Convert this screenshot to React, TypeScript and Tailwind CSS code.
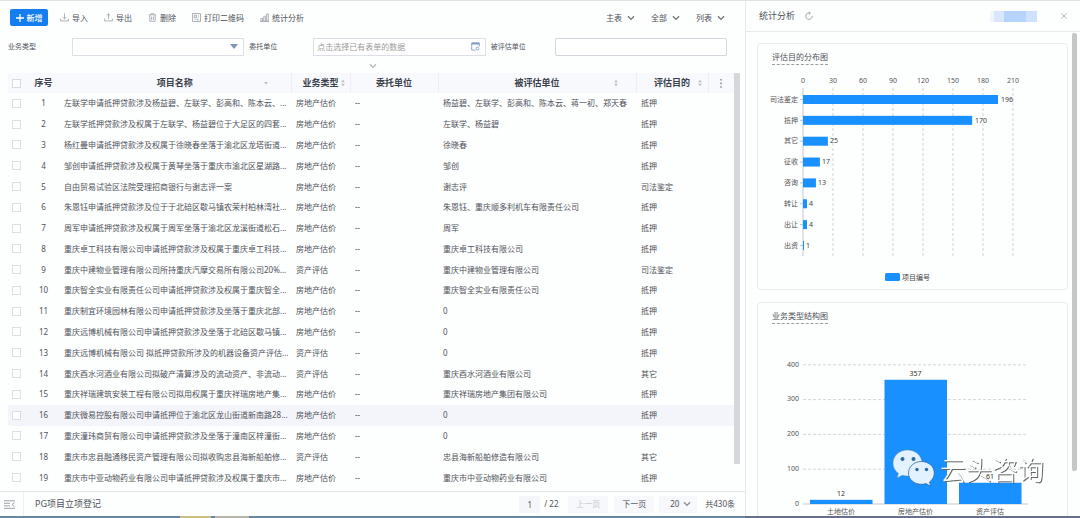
import { useState, type ReactNode } from 'react';

type Row = { name: string; type: string; subject: string; purpose: string };

const RE = '房地产估价';
const AS = '资产评估';

const rows: Row[] = [
  { name: '左联学申请抵押贷款涉及杨益碧、左联学、彭高和、陈本云、...', type: RE, subject: '杨益碧、左联学、彭高和、陈本云、蒋一初、郑天春', purpose: '抵押' },
  { name: '左联学抵押贷款涉及权属于左联学、杨益碧位于大足区的四套...', type: RE, subject: '左联学、杨益碧', purpose: '抵押' },
  { name: '杨红曼申请抵押贷款涉及权属于徐晓春坐落于渝北区龙塔街道...', type: RE, subject: '徐晓春', purpose: '抵押' },
  { name: '邹创申请抵押贷款涉及权属于黄琴坐落于重庆市渝北区星湖路...', type: RE, subject: '邹创', purpose: '抵押' },
  { name: '自由贸易试验区法院受理招商银行与谢志评一案', type: RE, subject: '谢志评', purpose: '司法鉴定' },
  { name: '朱恩钰申请抵押贷款涉及位于于北碚区歇马镇农荣村柏林湾社...', type: RE, subject: '朱恩钰、重庆顺多利机车有限责任公司', purpose: '抵押' },
  { name: '周军申请抵押贷款涉及权属于周军坐落于渝北区龙溪街道松石...', type: RE, subject: '周军', purpose: '抵押' },
  { name: '重庆卓工科技有限公司申请抵押贷款涉及权属于重庆卓工科技...', type: RE, subject: '重庆卓工科技有限公司', purpose: '抵押' },
  { name: '重庆中建物业管理有限公司所持重庆汽摩交易所有限公司20%...', type: AS, subject: '重庆中建物业管理有限公司', purpose: '司法鉴定' },
  { name: '重庆智全实业有限责任公司申请抵押贷款涉及权属于重庆智全...', type: RE, subject: '重庆智全实业有限责任公司', purpose: '抵押' },
  { name: '重庆制宜环境园林有限公司申请抵押贷款涉及坐落于重庆北部...', type: RE, subject: '0', purpose: '抵押' },
  { name: '重庆远博机械有限公司申请抵押贷款涉及坐落于北碚区歇马镇...', type: RE, subject: '0', purpose: '抵押' },
  { name: '重庆远博机械有限公司 拟抵押贷款所涉及的机器设备资产评估...', type: AS, subject: '0', purpose: '抵押' },
  { name: '重庆酉水河酒业有限公司拟破产清算涉及的流动资产、非流动...', type: AS, subject: '重庆酉水河酒业有限公司', purpose: '其它' },
  { name: '重庆祥瑞建筑安装工程有限公司拟用权属于重庆祥瑞房地产集...', type: RE, subject: '重庆祥瑞房地产集团有限公司', purpose: '抵押' },
  { name: '重庆微易控股有限公司申请抵押位于渝北区龙山街道新南路28...', type: RE, subject: '0', purpose: '抵押' },
  { name: '重庆潼玮商贸有限公司申请抵押贷款涉及坐落于潼南区梓潼街...', type: RE, subject: '0', purpose: '抵押' },
  { name: '重庆市忠县融通移民资产管理有限公司拟收购忠县海新船舶修...', type: AS, subject: '忠县海新船舶修造有限公司', purpose: '其它' },
  { name: '重庆市中亚动物药业有限公司申请抵押贷款涉及权属于重庆市...', type: RE, subject: '重庆市中亚动物药业有限公司', purpose: '抵押' },
];

const purposeData = [
  { label: '司法鉴定', value: 196 },
  { label: '抵押', value: 170 },
  { label: '其它', value: 25 },
  { label: '征收', value: 17 },
  { label: '咨询', value: 13 },
  { label: '转让', value: 4 },
  { label: '出让', value: 4 },
  { label: '出资', value: 1 },
];

const typeData = [
  { label: '土地估价', value: 12 },
  { label: '房地产估价', value: 357 },
  { label: '资产评估', value: 61 },
];

function Chevron({ className = '' }: { className?: string }) {
  return (
    <svg viewBox="0 0 8 6" className={`pointer-events-none h-[6px] w-[8px] ${className}`} fill="none" stroke="currentColor" strokeWidth="1.3">
      <path d="M1 1.2 4 4.4 7 1.2" />
    </svg>
  );
}

function ToolButton({ icon, label }: { icon: ReactNode; label: string }) {
  return (
    <button type="button" className="flex items-center gap-[3px] whitespace-nowrap">
      <svg viewBox="0 0 10 10" className="size-[9px] text-[#a4a8af]" fill="none" stroke="currentColor" strokeWidth="1">
        {icon}
      </svg>
      {label}
    </button>
  );
}

function ViewSelect({ label, value }: { label: string; value: string }) {
  return (
    <div className="grid w-[29px] items-center">
      <select aria-label={label} className="col-start-1 row-start-1 appearance-none bg-transparent" defaultValue={value}>
        <option>{value}</option>
      </select>
      <Chevron className="col-start-1 row-start-1 justify-self-end text-[#6d7078]" />
    </div>
  );
}

function HeadCell({ label, sort, gap = 'mr-[6px]' }: { label: string; sort?: 'both' | 'down'; gap?: string }) {
  return (
    <th scope="col" className="border-r border-[#eceef3] p-0 font-bold">
      <div className="flex items-center whitespace-nowrap">
        <span className="min-w-0 flex-1" />
        {label}
        <span className="flex min-w-0 flex-1 justify-end">
          {sort && (
            <svg viewBox="0 0 4 8" className={`h-[8px] w-[4px] shrink-0 fill-[#b9bcc4] ${gap}`}>
              {sort === 'both' && <path d="M2 .8 3.8 3.3H.2Z" />}
              {sort === 'both' ? <path d="M2 7.2 3.8 4.7H.2Z" /> : <path d="M2 5.500 4 3H0Z" />}
            </svg>
          )}
        </span>
      </div>
    </th>
  );
}

function PurposeChart() {
  const x0 = 45;
  return (
    <svg viewBox="0 0 309 219" className="block w-full text-[7px]" role="img" aria-label="评估目的分布图">
      {[0, 30, 60, 90, 120, 150, 180, 210].map((t) => (
        <g key={t}>
          <line x1={x0 + t} x2={x0 + t} y1="18" y2="186" stroke={t ? '#d3d3d3' : '#c4c8d0'} strokeWidth="1" strokeDasharray={t ? '3 2' : undefined} />
          <text x={x0 + t} y="13" textAnchor="middle" fill="#555">{t}</text>
        </g>
      ))}
      {purposeData.map((d, i) => {
        const y = 29.5 + i * 20.85;
        return (
          <g key={d.label}>
            <line x1={x0 - 3} x2={x0} y1={y} y2={y} stroke="#a9c6e6" />
            <text x={x0 - 5} y={y + 2.2} textAnchor="end" fill="#555">{d.label}</text>
            <rect x={x0} y={y - 4.5} width={d.value * 0.995} height="9" fill="#1890ff" />
            <text x={x0 + d.value + 2} y={y + 2.2} fill="#444">{d.value}</text>
          </g>
        );
      })}
      <rect x="127" y="203" width="15" height="8" rx="1.5" fill="#1890ff" />
      <text x="144" y="210" fill="#444">项目编号</text>
    </svg>
  );
}

function TypeChart() {
  const base = 175;
  return (
    <svg viewBox="0 0 309 190" className="block w-full text-[7px]" role="img" aria-label="业务类型结构图">
      {[0, 100, 200, 300, 400].map((t) => {
        const y = base - t * 0.348;
        return (
          <g key={t}>
            <line x1="45" x2="270" y1={y} y2={y} stroke={t ? '#d6d6d6' : '#c4c8d0'} strokeDasharray={t ? '3 2' : undefined} />
            <text x="41" y={y + 1.8} textAnchor="end" fill="#555">{t}</text>
          </g>
        );
      })}
      {typeData.map((d, i) => (
        <rect key={d.label} x={52 + i * 74.5} y={base - d.value * 0.348} width="62.5" height={d.value * 0.348} fill="#1890ff" />
      ))}
      <g transform="translate(134 120)">
        <path d="M15.500 1C7.200 1 1 6.900 1 14.200c0 4.200 2.100 7.700 5.400 10.200L5 29l5.200-2.700c1.700.5 3.400.8 5.300.8C23.700 27.100 30 21.400 30 14.200 30 6.900 23.700 1 15.500 1Z" fill="#e3f2ff" stroke="#5d86ad" strokeWidth=".5" />
        <circle cx="10.500" cy="10" r="2" fill="#2e69a4" />
        <circle cx="21.500" cy="10" r="2" fill="#2e69a4" />
        <path d="M29.500 12.500C22.200 12.500 16.500 17.500 16.500 24s5.700 11.300 13 11.300c1.600 0 3.100-.2 4.500-.7l4.800 2.600-1.300-4.200c3-2.100 4.800-5.300 4.800-9 0-6.500-5.600-11.500-12.800-11.500Z" fill="#e3f2ff" stroke="#2e69a4" strokeWidth=".8" />
        <circle cx="25" cy="20.500" r="1.700" fill="#2e69a4" />
        <circle cx="34.500" cy="20.500" r="1.700" fill="#2e69a4" />
      </g>
      <text x="182" y="151" fill="#fff" className="text-[26px] font-light [filter:drop-shadow(1px_1px_0.5px_#666)]">云头咨询</text>
      {typeData.map((d, i) => (
        <g key={d.label} textAnchor="middle">
          <text x={83 + i * 74.5} y={base - d.value * 0.348 - 4} fill="#333">{d.value}</text>
          <text x={83 + i * 74.5} y={base + 10} fill="#555">{d.label}</text>
        </g>
      ))}
    </svg>
  );
}

export default function App() {
  const [page, setPage] = useState('1');
  return (
    <div className="flex h-screen flex-col overflow-hidden border-t border-[#dfe1e4] bg-[#fdfefe] font-['Noto_Sans','Noto_Sans_CJK_SC',sans-serif] text-[8px] leading-[10px] text-[#4f525a]">
      <div className="flex min-h-0 flex-1">
        <main className="flex min-w-0 flex-1 flex-col">
          <div className="flex h-[33px] items-center justify-between pr-[20px] pl-[10px]">
            <div className="flex items-center">
              <button type="button" className="mr-[12px] flex h-[17px] w-[38px] items-center justify-center gap-[3px] rounded-[2px] bg-[#147df0] font-medium text-white">
                <svg viewBox="0 0 8 8" className="size-[8px]" stroke="currentColor" strokeWidth="1.3"><path d="M4 0v8M0 4h8" /></svg>
                新增
              </button>
              <div className="flex items-center gap-[16px]">
                <ToolButton label="导入" icon={<path d="M5 .5v6M3 4.7l2 2 2-2M.7 6.2v2.6h8.6V6.2" />} />
                <ToolButton label="导出" icon={<path d="M5 7V1M3 2.8l2-2 2 2M.7 6.2v2.6h8.6V6.2" />} />
                <ToolButton label="删除" icon={<path d="M1 2h8M3.5 2V.8h3V2M2 2v7.2h6V2M4 4v3.7M6 4v3.7" />} />
                <ToolButton label="打印二维码" icon={<path d="M.6.6h8.8v8.8H.6ZM2.5 2.5H5V5H2.5ZM6.5 2.5h1M6.5 4.5h1M2.5 7H4M5.5 6v1.6h2" />} />
                <ToolButton label="统计分析" icon={<path d="M1 9.3V6h1.8v3.3ZM4.2 9.3V3.6H6v5.7ZM7.4 9.3V1h1.8v8.3ZM0 9.4h10" />} />
              </div>
            </div>
            <div className="flex items-center gap-[16px]">
              <ViewSelect label="表" value="主表" />
              <ViewSelect label="范围" value="全部" />
              <ViewSelect label="视图" value="列表" />
            </div>
          </div>

          <form className="grid h-[25px] grid-cols-3 items-center gap-[5px] pr-[18px] pl-[8px]">
            <div className="flex items-center">
              <label htmlFor="biz" className="w-[64px] text-[7px]">业务类型</label>
              <div className="grid flex-1 items-center">
                <select id="biz" className="col-start-1 row-start-1 h-[18px] w-full appearance-none border border-[#dcdfe6] bg-white" defaultValue="">
                  <option value="" />
                </select>
                <svg viewBox="0 0 8 5" className="pointer-events-none col-start-1 row-start-1 mr-[6px] h-[5px] w-[8px] justify-self-end fill-[#7f95b5]"><path d="M0 0h8L4 5Z" /></svg>
              </div>
            </div>
            <div className="flex items-center">
              <label htmlFor="client" className="w-[64px] text-[7px]">委托单位</label>
              <div className="flex h-[18px] min-w-0 flex-1 items-center border border-[#dcdfe6] bg-white pr-[5px] pl-[3px]">
                <input id="client" placeholder="点击选择已有表单的数据" className="min-w-0 flex-1 outline-none placeholder:text-[#9b9b9b]" />
                <svg viewBox="0 0 10 10" className="size-[9px]" fill="none" stroke="#7f9cc4">
                  <path d="M5 9H.8V1h8.4v4" /><path d="M.8 1.8h8.4" strokeWidth="2" /><circle cx="7.2" cy="7.2" r="1.6" />
                </svg>
              </div>
            </div>
            <div className="flex items-center">
              <label htmlFor="subject" className="w-[64px] text-[7px]">被评估单位</label>
              <input id="subject" className="h-[18px] min-w-0 flex-1 rounded-[2px] border border-[#d3d6dd] bg-white px-[3px] outline-none" />
            </div>
          </form>
          <button type="button" aria-label="展开筛选" className="flex h-[14px] items-center justify-center">
            <Chevron className="text-[#b5b8bf]" />
          </button>

          <div className="flex min-h-0 flex-1 pr-[5px] pb-[3px] pl-[8px]">
            <table className="h-full min-w-0 flex-1 table-fixed border-collapse">
              <colgroup>
                <col className="w-[20px]" /><col className="w-[31px]" /><col className="w-[232px]" /><col className="w-[59px]" />
                <col className="w-[88px]" /><col /><col className="w-[72px]" /><col className="w-[26px]" />
              </colgroup>
              <thead>
                <tr className="h-[20px] bg-[#f8f9fd] text-[9px] text-[#3a404a]">
                  <th scope="col" className="p-0 pl-[4px]">
                    <input type="checkbox" aria-label="全选" className="block size-[9px] appearance-none border border-[#d9dbe2] bg-white" />
                  </th>
                  <th scope="col" className="p-0 font-bold">序号</th>
                  <HeadCell label="项目名称" sort="down" gap="mr-[23px]" />
                  <HeadCell label="业务类型" sort="both" gap="mr-[5px]" />
                  <HeadCell label="委托单位" />
                  <HeadCell label="被评估单位" sort="both" gap="mr-[18px]" />
                  <HeadCell label="评估目的" sort="both" />
                  <th scope="col" className="p-0">
                    <button type="button" aria-label="列设置" className="mx-auto flex items-center">
                      <svg viewBox="0 0 2 9" className="h-[9px] w-[2px] fill-[#a3a6ad]"><path d="M0 0h2v1.6H0ZM0 3.6h2v1.6H0ZM0 7.2h2v1.6H0Z" /></svg>
                    </button>
                  </th>
                </tr>
              </thead>
              <tbody>
                {rows.map((r, i) => (
                  <tr key={i} className={i === 15 ? 'bg-[#f4f5fa]' : ''}>
                    <td className="p-0 pl-[4px]">
                      <input type="checkbox" aria-label={`选择第${i + 1}行`} className="block size-[9px] appearance-none border border-[#dedfe5] bg-white" />
                    </td>
                    <td className="p-0 text-center">{i + 1}</td>
                    <td className="p-0 pl-[5px] whitespace-nowrap">{r.name}</td>
                    <td className="p-0 pl-[5px] whitespace-nowrap">{r.type}</td>
                    <td className="p-0 pl-[5px]">--</td>
                    <td className="p-0 pl-[5px] whitespace-nowrap">{r.subject}</td>
                    <td className="p-0 pl-[5px] whitespace-nowrap">{r.purpose}</td>
                    <td className="p-0" />
                  </tr>
                ))}
              </tbody>
            </table>
            <div className="mb-[24px] w-[6px] bg-[#d6d7da]" />
          </div>

          <footer className="flex h-[25px] items-center border-t border-[#e3e5e9] pr-[10px]">
            <button type="button" aria-label="折叠菜单" className="flex h-full w-[24px] items-center border-r border-[#eef0f3] pl-[4px]">
              <svg viewBox="0 0 11 9" className="h-[9px] w-[11px]" fill="none" stroke="#9ea2a9"><path d="M0 .8h11M0 3.3h6M0 5.8h6M0 8.3h11M10.5 2.6 8 4.5l2.500 2" /></svg>
            </button>
            <span className="flex-1 pl-[11px] text-[9px]">PG项目立项登记</span>
            <input aria-label="页码" value={page} onChange={(e) => setPage(e.target.value)} className="h-[17px] w-[21px] bg-[#f5f6f9] text-center" />
            <span className="w-[28px] pl-[4px]">/ 22</span>
            <button type="button" disabled className="mr-[6px] h-[17px] w-[40px] bg-[#f7f8fb] text-[#c3c6cd]">上一页</button>
            <button type="button" className="mr-[5px] h-[17px] w-[40px] bg-[#f7f8fb]">下一页</button>
            <div className="mr-[8px] grid h-[17px] w-[38px] items-center bg-[#f7f8fb]">
              <select aria-label="每页条数" className="col-start-1 row-start-1 appearance-none bg-transparent pl-[11px]" defaultValue="20"><option>20</option></select>
              <Chevron className="col-start-1 row-start-1 mr-[6px] justify-self-end text-[#888]" />
            </div>
            <span className="whitespace-nowrap">共430条</span>
          </footer>
        </main>

        <aside className="flex w-[335px] shrink-0 flex-col border-l border-[#e6e8ec]">
          <header className="flex h-[31px] items-center border-b border-[#e8eaee] pr-[13px] pl-[13px]">
            <h2 className="text-[9px]">统计分析</h2>
            <button type="button" aria-label="刷新" className="ml-[10px]">
              <svg viewBox="0 0 10 10" className="size-[8px]" fill="none" stroke="#8b8f97"><path d="M6.2 1.2A4.1 4.1 0 1 0 9.1 5M4.6.2 6.6 1.3 5.3 3.2" /></svg>
            </button>
            <div className="ml-auto flex h-[11px]">
              <span className="w-[4px] bg-[#f0f6fe]" /><span className="w-[10px] bg-[#d8e7fb]" /><span className="w-[22px] bg-[#b5d3fb]" /><span className="w-[11px] bg-[#cfe2fc]" />
            </div>
            <button type="button" aria-label="关闭" className="ml-[24px]">
              <svg viewBox="0 0 6 6" className="size-[6px]" stroke="#a5a9b0" strokeWidth=".8"><path d="m.3.3 5.4 5.4M5.7.3.3 5.7" /></svg>
            </button>
          </header>
          <div className="flex min-h-0 flex-1 pr-[3px]">
            <div className="flex min-w-0 flex-1 flex-col gap-[12px] overflow-hidden pt-[11px] pr-[4px] pl-[11px]">
              <section className="shrink-0 rounded-[4px] border border-[#e9ebef]">
                <h3 className="mt-[8px] ml-[14px] w-fit border-b border-dashed border-[#9a9da5] pb-[2px]">评估目的分布图</h3>
                <div className="mt-[5px]"><PurposeChart /></div>
              </section>
              <section className="shrink-0 rounded-[4px] border border-[#e9ebef]">
                <h3 className="mt-[8px] ml-[14px] w-fit border-b border-dashed border-[#9a9da5] pb-[2px]">业务类型结构图</h3>
                <div className="mt-[5px]"><TypeChart /></div>
              </section>
            </div>
            <div className="mt-[1px] mb-[45px] w-[5px] rounded-[2px] bg-[#c5c6c8]" />
          </div>
        </aside>
      </div>
      <div className="flex h-[2px] shrink-0 bg-[#6688a4]">
        <span className="ml-[180px] w-[31px] bg-[#c9bf83]" /><span className="ml-[4px] w-[34px] bg-[#b9b8a8]" />
        <span className="ml-auto w-[335px] bg-[#66708a]" />
      </div>
    </div>
  );
}
